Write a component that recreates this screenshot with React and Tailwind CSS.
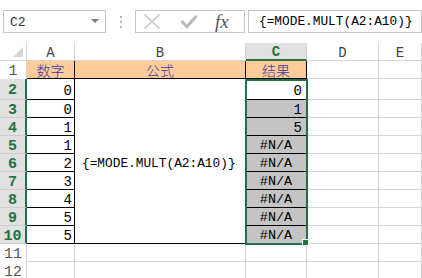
import React from "react";

const MONO = "font-['Liberation_Mono','Noto_Sans_CJK_SC',monospace]";

const aVals = ["0", "0", "1", "1", "2", "3", "4", "5", "5"];
const cVals = ["0", "1", "5", "#N/A", "#N/A", "#N/A", "#N/A", "#N/A", "#N/A"];

function RowHead({ n, sel }) {
  return sel ? (
    <div className="bg-[#e1e1e1] border-r-2 border-r-[#217346] border-b border-b-[#cdcdcd] flex items-center justify-center pt-[3px] text-[15px] leading-[15px] font-bold text-[#217346]">
      {n}
    </div>
  ) : (
    <div className="bg-white border-r border-r-[#d4d4d4] flex items-center justify-center pt-[2px] text-[15px] leading-[15px] text-[#555]">
      {n}
    </div>
  );
}

function Grid() {
  return <div className="border-r border-b border-[#d4d4d4]" />;
}

export default function App() {
  const rows = [];
  rows.push(
    <React.Fragment key="r1">
      <RowHead n="1" sel={false} />
      <div className="bg-[#ffcc99] border-r border-b border-black flex items-center justify-center font-['Noto_Sans_CJK_SC',sans-serif] font-light text-[14px] leading-[16px] text-[#3a3aa0]">
        数字
      </div>
      <div className="bg-[#ffcc99] border-r border-b border-black flex items-center justify-center font-['Noto_Sans_CJK_SC',sans-serif] font-light text-[14px] leading-[16px] text-[#3a3aa0]">
        公式
      </div>
      <div className="bg-[#ffcc99] border-r border-b border-black flex items-center justify-center font-['Noto_Sans_CJK_SC',sans-serif] font-light text-[14px] leading-[16px] text-[#3a3aa0]">
        结果
      </div>
      <Grid />
      <Grid />
    </React.Fragment>
  );
  for (let i = 0; i < 9; i++) {
    const c = cVals[i];
    rows.push(
      <React.Fragment key={"r" + (i + 2)}>
        <RowHead n={String(i + 2)} sel={true} />
        <div className="border-r border-b border-black flex items-center justify-end pr-[2px] pt-[3px] text-[14px] leading-[14px] text-black">
          {aVals[i]}
        </div>
        {i === 0 && (
          <div className="row-span-9 border-r border-b border-black flex items-center justify-start pl-[7px] pt-[6px] text-[12.8px] leading-[14px] text-black whitespace-nowrap">
            {"{=MODE.MULT(A2:A10)}"}
          </div>
        )}
        {i === 0 ? (
          <div className="bg-white border-r border-b border-black flex items-center justify-end pr-[4px] pt-[3px] text-[14px] leading-[14px] text-black">
            {c}
          </div>
        ) : c === "#N/A" ? (
          <div className="bg-[#c4c4c4] border-r border-b border-black flex items-center justify-center pt-[3px] text-[13.5px] leading-[14px] text-black">
            {c}
          </div>
        ) : (
          <div className="bg-[#c4c4c4] border-r border-b border-black flex items-center justify-end pr-[4px] pt-[3px] text-[14px] leading-[14px] text-black">
            {c}
          </div>
        )}
        <Grid />
        <Grid />
      </React.Fragment>
    );
  }
  for (const n of ["11", "12"]) {
    rows.push(
      <React.Fragment key={"r" + n}>
        <RowHead n={n} sel={false} />
        <Grid />
        <Grid />
        <Grid />
        <Grid />
        <Grid />
      </React.Fragment>
    );
  }

  return (
    <div className={"w-[422px] h-[278px] overflow-hidden bg-white relative " + MONO}>
      <div className="h-[43px] flex items-start pt-[10px]">
        <div className="ml-[3px] w-[103px] h-[23px] border border-[#c6c6c6] flex items-center justify-between pl-[6px] pr-[6px]">
          <span className="text-[13px] leading-[14px] text-[#333] pt-[2px]">C2</span>
          <svg width="8" height="5" viewBox="0 0 8 5">
            <polygon points="0,0 8,0 4,4" fill="#7a7a7a" />
          </svg>
        </div>
        <div className="w-[29px] h-[23px] flex flex-col items-center justify-center gap-[3px]">
          <div className="w-[2px] h-[2px] bg-[#b5b5b5]" />
          <div className="w-[2px] h-[2px] bg-[#b5b5b5]" />
          <div className="w-[2px] h-[2px] bg-[#b5b5b5]" />
        </div>
        <div className="w-[110px] h-[23px] border border-[#c6c6c6] flex items-center pl-[7px]">
          <svg width="18" height="17" viewBox="0 0 18 17">
            <line x1="1.5" y1="1.5" x2="16.5" y2="15.5" stroke="#c4c4c4" strokeWidth="1.6" />
            <line x1="16.5" y1="1.5" x2="1.5" y2="15.5" stroke="#c4c4c4" strokeWidth="1.6" />
          </svg>
          <svg className="ml-[19px]" width="18" height="15" viewBox="0 0 18 15">
            <polyline points="1.5,7 7,12.5 16.5,2" fill="none" stroke="#b9b9b9" strokeWidth="3" />
          </svg>
          <span className="ml-[17px] font-['Liberation_Serif',serif] italic text-[19px] leading-[20px] text-[#555]">
            fx
          </span>
        </div>
        <div className="ml-[3px] w-[174px] h-[23px] border border-[#c6c6c6] flex items-center pl-[10px] pt-[1px] text-[12.8px] leading-[14px] text-black whitespace-nowrap">
          {"{=MODE.MULT(A2:A10)}"}
        </div>
      </div>

      <div className="relative grid grid-cols-[27px_48px_171px_61px_72px_43px] grid-rows-[18px_18px_21px_repeat(10,18px)]">
        <div className="border-r border-b border-[#d4d4d4] relative">
          <svg className="absolute left-0 top-0" width="26" height="17" viewBox="0 0 26 17">
            <polygon points="23,4 23,14 13,14" fill="#d5d5d5" />
          </svg>
        </div>
        <div className="border-r border-b border-[#d4d4d4] flex items-center justify-center pt-[2px] text-[14px] leading-[14px] text-[#444]">A</div>
        <div className="border-r border-b border-[#d4d4d4] flex items-center justify-center pt-[2px] text-[14px] leading-[14px] text-[#444]">B</div>
        <div className="bg-[#e1e1e1] border-r border-r-[#d4d4d4] border-b-2 border-b-[#217346] flex items-center justify-center pt-[2px] text-[14px] leading-[14px] font-bold text-[#217346]">C</div>
        <div className="border-r border-b border-[#d4d4d4] flex items-center justify-center pt-[2px] text-[14px] leading-[14px] text-[#444]">D</div>
        <div className="border-r border-b border-[#d4d4d4] flex items-center justify-center pt-[2px] text-[14px] leading-[14px] text-[#444]">E</div>
        {rows}

        <div className="absolute left-[245px] top-[36px] w-[63px] h-[166px] border-2 border-[#217346] pointer-events-none">
          <div className="absolute -right-[3px] -bottom-[3px] w-[7px] h-[7px] bg-[#217346] border border-white" />
        </div>
      </div>
    </div>
  );
}
